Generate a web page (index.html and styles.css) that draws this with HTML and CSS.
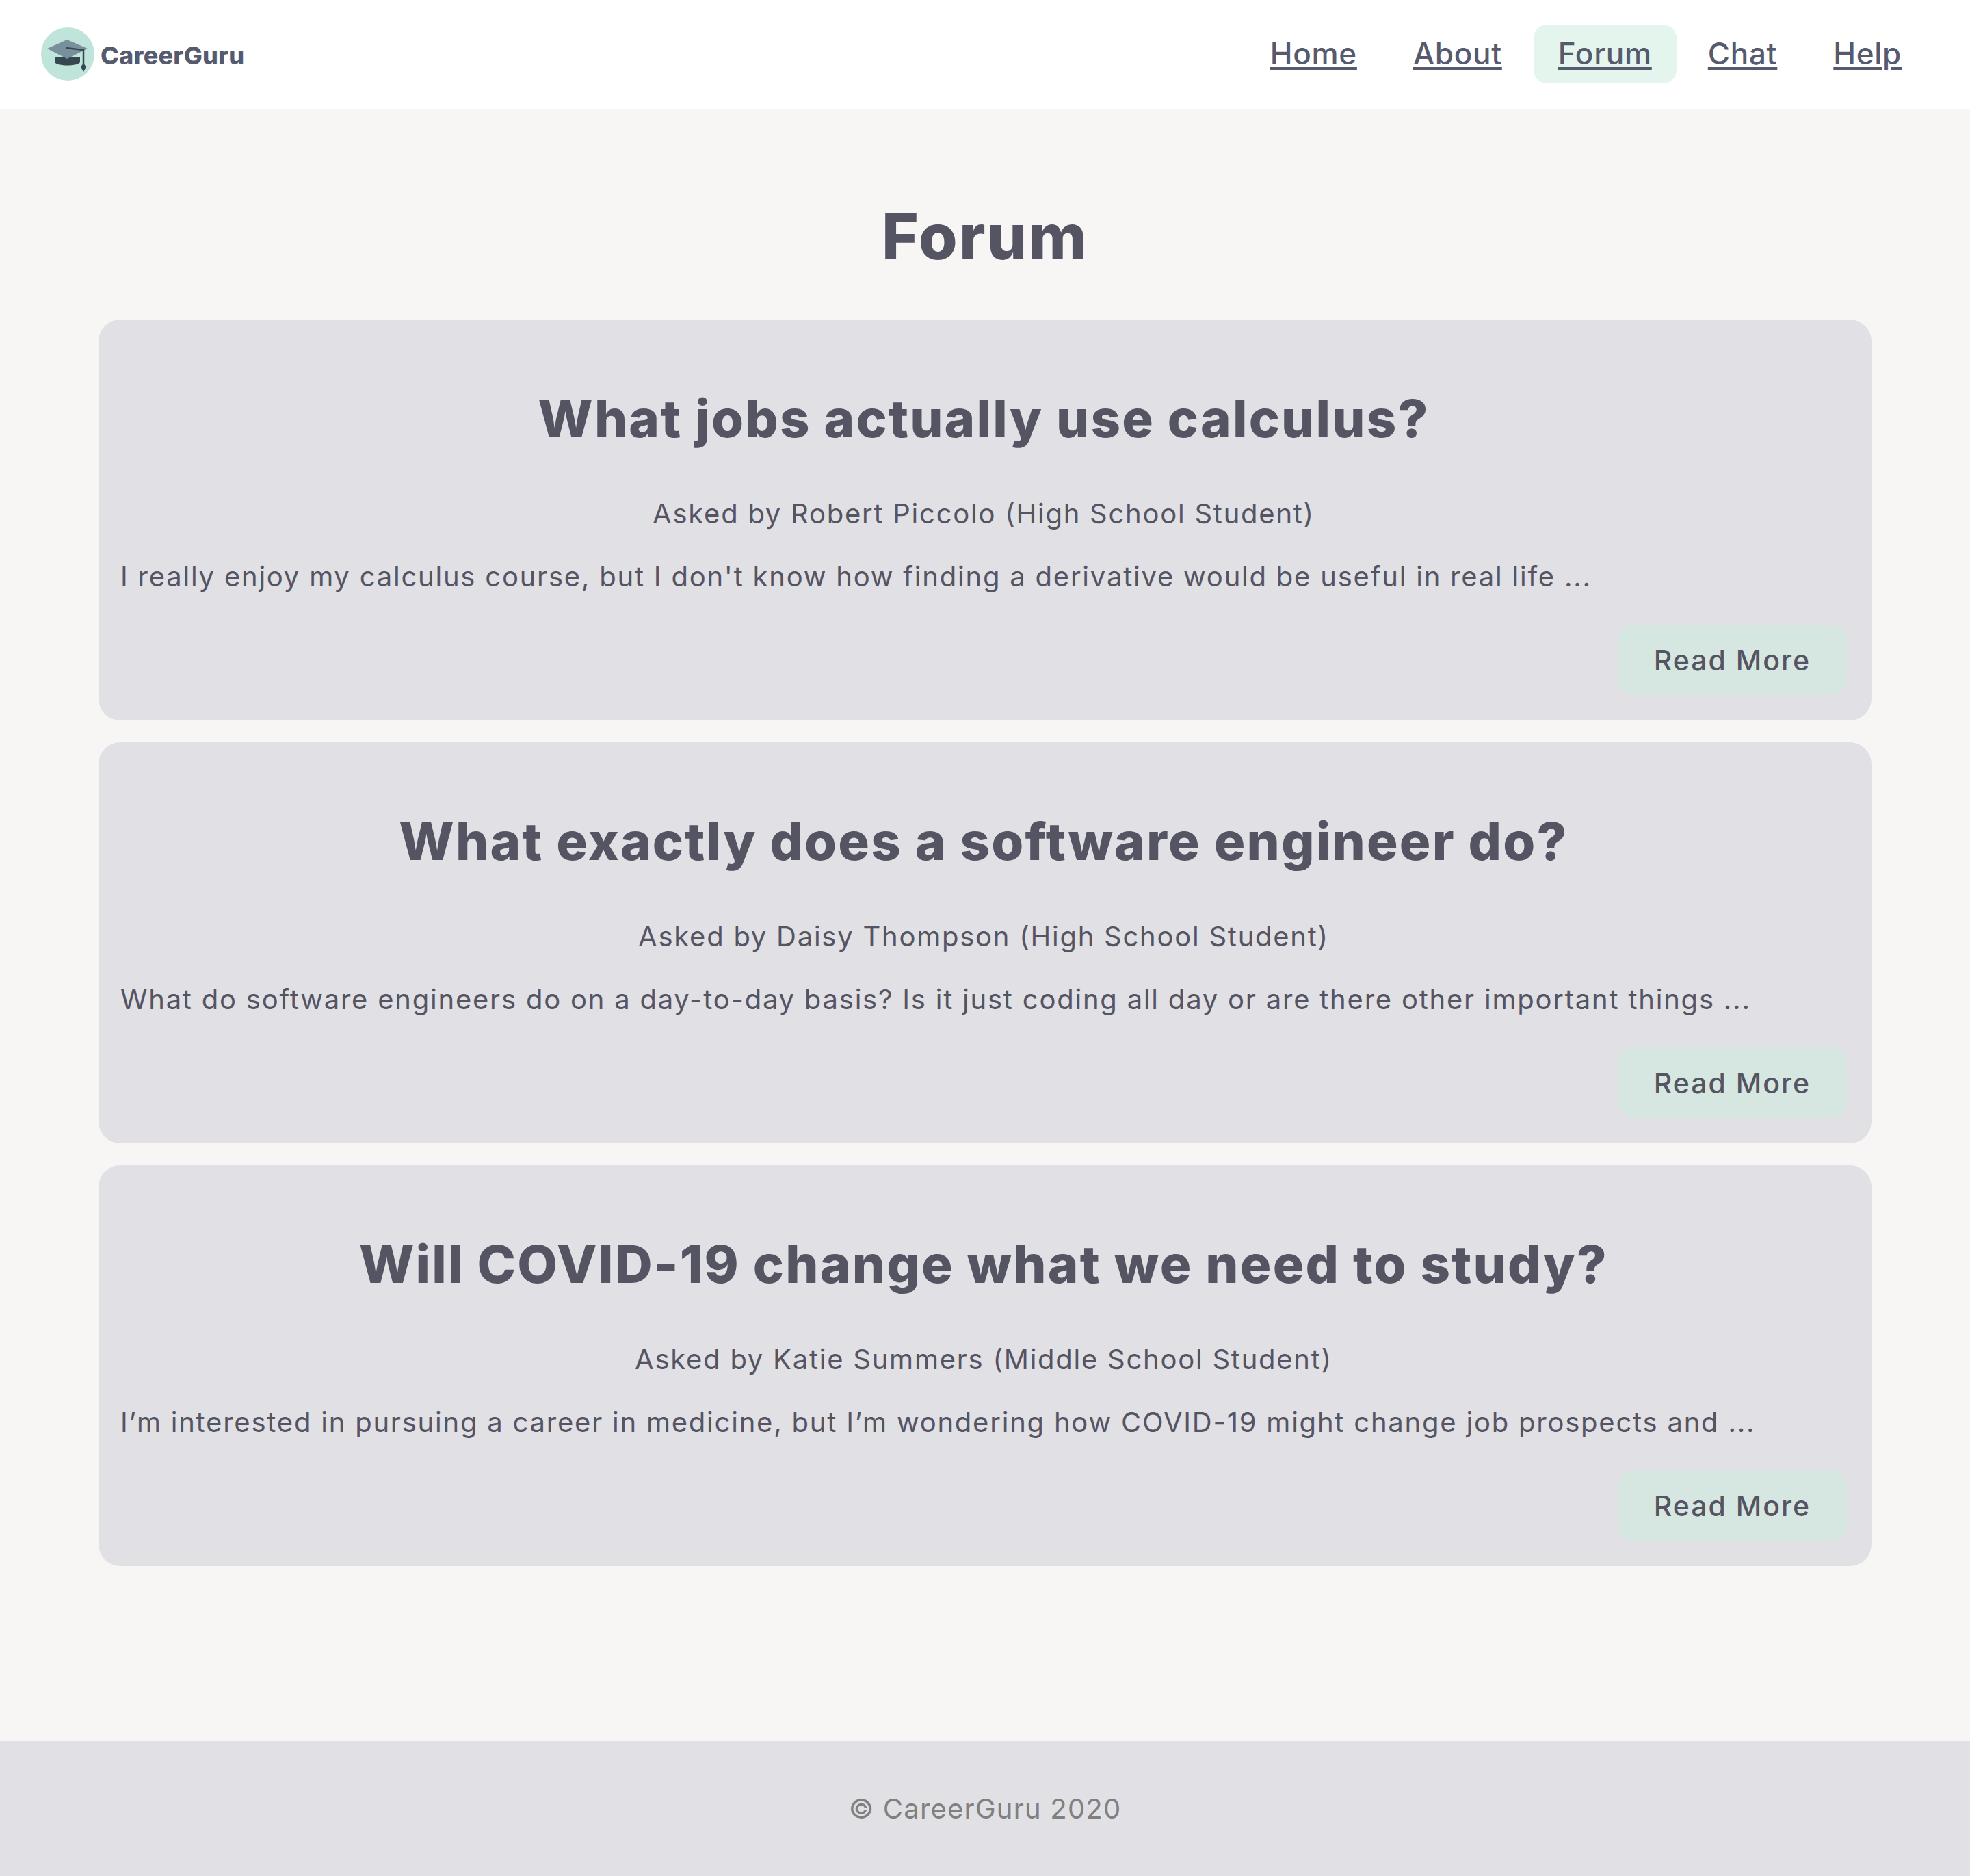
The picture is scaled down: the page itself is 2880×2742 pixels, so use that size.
FILE: index.html
```html
<!DOCTYPE html>
<html lang="en">
<head>
  <meta charset="UTF-8" />
  <title>Forum - CareerGuru</title>
  <link rel="stylesheet" href="styles.css">
</head>
<body>

  <nav class="navbar">
    <a class="brand" href="#">
      <svg class="brand-logo" viewBox="0 0 78 78" aria-hidden="true">
        <circle cx="39" cy="39" r="39" fill="#bfe4da" />
        <path d="M20 43 L20 51 C24 57 53 57 57 51 L57 43 Z" fill="#36474f" />
        <path d="M9 31 L38 18 L68 31 L38 46 Z" fill="#78909c" />
        <path d="M36 30 L62 33 L62 57" fill="none" stroke="#36474f" stroke-width="2.5" />
        <path d="M62 53 C65 55 66 58 65 60 L62 65 L59 60 C58 58 59 55 62 53 Z" fill="#36474f" />
      </svg>
      <span class="brand-name">CareerGuru</span>
    </a>
    <div class="nav-links">
      <a href="#">Home</a>
      <a href="#">About</a>
      <a class="active" href="#">Forum</a>
      <a href="#">Chat</a>
      <a href="#">Help</a>
    </div>
  </nav>

  <main class="content">
    <h1>Forum</h1>

    <article class="question">
      <h2>What jobs actually use calculus?</h2>
      <p class="asker">Asked by Robert Piccolo (High School Student)</p>
      <p class="excerpt">I really enjoy my calculus course, but I don't know how finding a derivative would be useful in real life ...</p>
      <div class="actions"><button class="btn">Read More</button></div>
    </article>

    <article class="question">
      <h2>What exactly does a software engineer do?</h2>
      <p class="asker">Asked by Daisy Thompson (High School Student)</p>
      <p class="excerpt">What do software engineers do on a day-to-day basis? Is it just coding all day or are there other important things ...</p>
      <div class="actions"><button class="btn">Read More</button></div>
    </article>

    <article class="question">
      <h2>Will COVID-19 change what we need to study?</h2>
      <p class="asker">Asked by Katie Summers (Middle School Student)</p>
      <p class="excerpt">I’m interested in pursuing a career in medicine, but I’m wondering how COVID-19 might change job prospects and ...</p>
      <div class="actions"><button class="btn">Read More</button></div>
    </article>
  </main>

  <footer class="footer">© CareerGuru 2020</footer>

</body>
</html>
```

FILE: styles.css
```css
* {
  box-sizing: border-box;
}

body {
  font-family: Inter, 'Open Sans', sans-serif;
  background: #f7f6f4;
  color: #555463;
  margin: 0;
  min-height: 100vh;
  display: flex;
  flex-direction: column;
}

.navbar {
  height: 160px;
  background: white;
  display: flex;
  justify-content: space-between;
  align-items: center;
  padding: 0 64px 2px 60px;
}

.brand {
  display: flex;
  align-items: center;
  gap: 9px;
  text-decoration: none;
  color: #555a6e;
}

.brand-logo {
  width: 78px;
  height: 78px;
}

.brand-name {
  padding-top: 4px;
  font-size: 36px;
  font-weight: 800;
  letter-spacing: 0.2px;
}

.nav-links {
  display: flex;
  gap: 10px;
  align-items: center;
}

.nav-links a {
  padding: 19px 36px 21px;
  border-radius: 20px;
  font-size: 44px;
  line-height: 46px;
  font-weight: 500;
  letter-spacing: 0.7px;
  color: #555a6e;
  text-decoration-thickness: 4px;
  text-underline-offset: 4px;
}

.nav-links a.active {
  background: #e4f5ed;
}

.content {
  flex: 1;
  padding: 0 144px;
}

h1 {
  margin: 0;
  padding-top: 128px;
  height: 307px;
  text-align: center;
  font-size: 92px;
  line-height: 116px;
  font-weight: 800;
  letter-spacing: 2.2px;
}

.question {
  background: #e0e0e5;
  border-radius: 32px;
  height: 586px;
  padding: 32px 36px 36px 32px;
  margin-bottom: 32px;
}

.question h2 {
  margin: 66px 0 0;
  text-align: center;
  font-size: 76px;
  line-height: 92px;
  font-weight: 800;
  letter-spacing: 2.2px;
}

.asker {
  margin: 66px 0 0;
  text-align: center;
  font-size: 40px;
  line-height: 56px;
  letter-spacing: 1.75px;
}

.excerpt {
  margin: 36px 0 0;
  font-size: 40px;
  line-height: 56px;
  letter-spacing: 1.78px;
}

.actions {
  display: flex;
  justify-content: flex-end;
  margin-top: 42px;
}

.btn {
  width: 335px;
  height: 103px;
  border: none;
  border-radius: 24px;
  background: #d6e7e1;
  color: #555463;
  font-family: inherit;
  font-size: 41px;
  font-weight: 500;
  letter-spacing: 2px;
}

.footer {
  height: 197px;
  background: #e0e0e5;
  color: #808080;
  display: flex;
  justify-content: center;
  align-items: center;
  font-size: 40px;
  letter-spacing: 1.2px;
}
```
